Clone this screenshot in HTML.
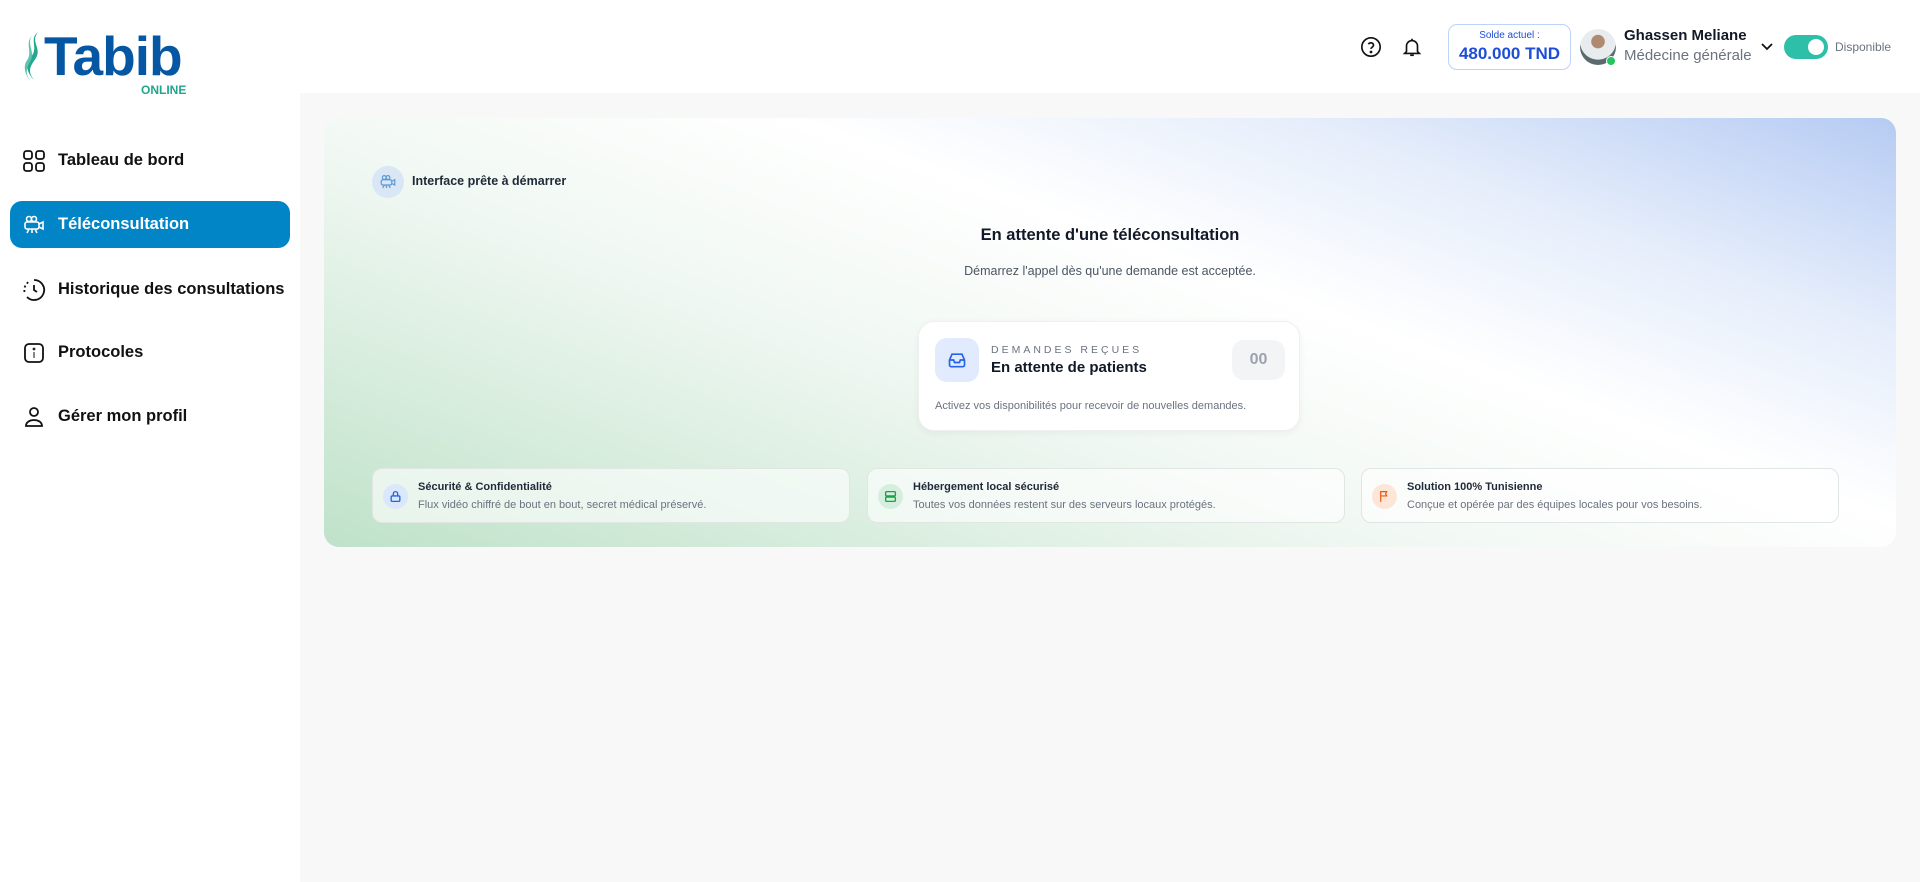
<!DOCTYPE html>
<html><head><meta charset="utf-8"><style>
*{box-sizing:border-box;margin:0;padding:0}
body{width:1920px;height:882px;overflow:hidden;background:#f8f8f8;font-family:"Liberation Sans",sans-serif;color:#111827;position:relative}
.hdr{position:absolute;left:0;top:0;width:1920px;height:93px;background:#fff;z-index:2}
.side{position:absolute;left:0;top:93px;width:300px;height:789px;background:#fff}
.nav{position:absolute;left:10px;width:280px;height:47px;display:flex;align-items:center;font-size:16.5px;font-weight:bold;color:#111;white-space:nowrap}
.nav svg{position:absolute;left:12px}
.nav span{position:absolute;left:48px}
.nav.act{background:#0285c6;color:#fff;border-radius:12px}
.hero{position:absolute;left:324px;top:118px;width:1572px;height:429px;border-radius:15px;background:linear-gradient(200deg,#b6cbf3 0%,#e6eefb 22%,#ffffff 40%,#f1f8f3 60%,#bfe2c9 100%)}
.abs{position:absolute}
.feat{position:absolute;top:350px;height:55px;width:478px;border:1px solid #dfe6e4;border-radius:10px;background:rgba(255,255,255,.6)}
.feat .ic{position:absolute;left:10px;top:15px;width:25px;height:25px;border-radius:50%}
.feat .t{position:absolute;left:45px;top:12px;font-size:11px;font-weight:bold;color:#1f2937}
.feat .d{position:absolute;left:45px;top:30px;font-size:11px;color:#6b7280}
</style></head><body>
<div class="hdr">
  <svg class="abs" style="left:20px;top:30px" width="26" height="52" viewBox="0 0 26 52"><path d="M18 2C8 10 20 18 10 28 4 34 8 44 14 50 6 40 12 34 16 28 22 18 10 12 18 2Z" fill="#21a88f"/><path d="M12 6C4 14 14 22 6 32 3 38 6 46 10 50 4 42 8 36 10 32 16 22 6 14 12 6Z" fill="#5ec3ad"/></svg>
  <div class="abs" style="left:44px;top:25px;font-size:55px;font-weight:bold;color:#0657a3;letter-spacing:-1px;line-height:62px">Tabib</div>
  <div class="abs" style="left:141px;top:83px;font-size:12px;font-weight:bold;color:#22a58e;line-height:14px">ONLINE</div>

  <svg class="abs" style="left:1360px;top:36px" width="22" height="22" viewBox="0 0 24 24" fill="none" stroke="#111" stroke-width="1.8"><circle cx="12" cy="12" r="10"/><path d="M9.2 9a3 3 0 0 1 5.6 1c0 2-2.8 2.5-2.8 4"/><circle cx="12" cy="17.5" r=".6" fill="#111"/></svg>
  <svg class="abs" style="left:1401px;top:35px" width="22" height="24" viewBox="0 0 24 24" fill="none" stroke="#111" stroke-width="1.8"><path d="M6 17V11a6 6 0 0 1 12 0v6l2 2H4z"/><path d="M10 21h4"/><path d="M12 3v2"/></svg>
  <div class="abs" style="left:1448px;top:24px;width:123px;height:46px;border:1.5px solid #bcd3f6;border-radius:9px;text-align:center">
    <div style="font-size:10px;color:#1d4ed8;margin-top:5px">Solde actuel :</div>
    <div style="font-size:17px;font-weight:bold;color:#1d4ed8;margin-top:3px">480.000 TND</div>
  </div>
  <div class="abs" style="left:1580px;top:29px;width:36px;height:36px;border-radius:50%;background:radial-gradient(circle at 50% 35%,#b08a70 0 22%,#e8ecef 24% 60%,#5a6b70 62%)"></div>
  <div class="abs" style="left:1606px;top:56px;width:10px;height:10px;border-radius:50%;background:#22c55e;border:1px solid #fff"></div>
  <div class="abs" style="left:1624px;top:27px;font-size:15px;font-weight:bold">Ghassen Meliane</div>
  <div class="abs" style="left:1624px;top:47px;font-size:15px;color:#6b7280">Médecine générale</div>
  <svg class="abs" style="left:1760px;top:42px" width="14" height="10" viewBox="0 0 14 10" fill="none" stroke="#111" stroke-width="1.8"><path d="M2 2l5 5 5-5"/></svg>
  <div class="abs" style="left:1784px;top:35px;width:44px;height:24px;border-radius:12px;background:#2ebfa8"><div style="position:absolute;right:4px;top:4px;width:16px;height:16px;border-radius:50%;background:#fff"></div></div>
  <div class="abs" style="left:1835px;top:40px;font-size:12px;color:#6b7280">Disponible</div>
</div>
<div class="side"></div>
<div class="nav" style="top:137px"><svg width="24" height="24" viewBox="0 0 24 24" fill="none" stroke="#111" stroke-width="1.8"><rect x="2" y="2" width="8" height="8" rx="2.5"/><rect x="14" y="2" width="8" height="8" rx="2.5"/><rect x="2" y="14" width="8" height="8" rx="2.5"/><rect x="14" y="14" width="8" height="8" rx="2.5"/></svg><span>Tableau de bord</span></div>
<div class="nav act" style="top:201px"><svg width="24" height="24" viewBox="0 0 24 24" fill="none" stroke="#fff" stroke-width="1.6"><circle cx="7" cy="6" r="2.5"/><circle cx="12" cy="6" r="2.5"/><rect x="3" y="9" width="14" height="7" rx="2"/><path d="M17 11l4-2v7l-4-2M7 16l-2 4M10 16v4M13 16l2 4"/></svg><span>Téléconsultation</span></div>
<div class="nav" style="top:266px"><svg width="24" height="24" viewBox="0 0 24 24" fill="none" stroke="#111" stroke-width="1.8"><path d="M12 2a10 10 0 1 1-7 17" /><path d="M2.5 14a10 10 0 0 1 4-10" stroke-dasharray="2 2.5"/><path d="M12 7v5l3 2"/></svg><span>Historique des consultations</span></div>
<div class="nav" style="top:329px"><svg width="24" height="24" viewBox="0 0 24 24" fill="none" stroke="#111" stroke-width="1.8"><rect x="3" y="3" width="18" height="18" rx="4"/><path d="M12 11v6" stroke-width="1"/><circle cx="12" cy="8" r=".5"/></svg><span>Protocoles</span></div>
<div class="nav" style="top:393px"><svg width="24" height="24" viewBox="0 0 24 24" fill="none" stroke="#111" stroke-width="1.8"><circle cx="12" cy="7" r="4"/><path d="M4 21c0-4 4-6 8-6s8 2 8 6z"/></svg><span>Gérer mon profil</span></div>

<div class="hero">
  <div class="abs" style="left:48px;top:48px;width:32px;height:32px;border-radius:50%;background:#d9e6f6"></div>
  <svg class="abs" style="left:55px;top:55px" width="18" height="18" viewBox="0 0 24 24" fill="none" stroke="#5b9bd5" stroke-width="1.6"><circle cx="7" cy="6" r="2.5"/><circle cx="12" cy="6" r="2.5"/><rect x="3" y="9" width="14" height="7" rx="2"/><path d="M17 11l4-2v7l-4-2M7 16l-2 4M10 16v4M13 16l2 4"/></svg>
  <div class="abs" style="left:88px;top:56px;font-size:12.5px;font-weight:bold;color:#1f2937">Interface prête à démarrer</div>
  <div class="abs" style="left:0;width:1572px;top:108px;text-align:center;font-size:16.5px;font-weight:bold;color:#111827">En attente d'une téléconsultation</div>
  <div class="abs" style="left:0;width:1572px;top:146px;text-align:center;font-size:12.5px;color:#4b5563">Démarrez l'appel dès qu'une demande est acceptée.</div>
  <div class="abs" style="left:594px;top:203px;width:382px;height:110px;background:#fff;border-radius:16px;box-shadow:0 2px 8px rgba(0,0,0,.05);border:1px solid #eef0f2">
    <div class="abs" style="left:16px;top:16px;width:44px;height:44px;border-radius:12px;background:#e1ebfd"></div>
    <svg class="abs" style="left:28px;top:28px" width="20" height="20" viewBox="0 0 24 24" fill="none" stroke="#2563eb" stroke-width="2"><path d="M3 12l3-7h12l3 7v6a2 2 0 0 1-2 2H5a2 2 0 0 1-2-2z"/><path d="M3 12h5l1 3h6l1-3h5"/></svg>
    <div class="abs" style="left:72px;top:22px;font-size:10.5px;letter-spacing:3px;color:#6b7280">DEMANDES REÇUES</div>
    <div class="abs" style="left:72px;top:37px;font-size:15px;font-weight:bold;color:#111827">En attente de patients</div>
    <div class="abs" style="left:313px;top:18px;width:53px;height:40px;border-radius:12px;background:#f3f4f6;text-align:center;line-height:40px;font-size:16px;font-weight:bold;color:#9ca3af">00</div>
    <div class="abs" style="left:16px;top:78px;font-size:11px;color:#6b7280">Activez vos disponibilités pour recevoir de nouvelles demandes.</div>
  </div>
  <div class="feat" style="left:48px"><div class="ic" style="background:#dbe7fb"></div><svg class="abs" style="left:16px;top:21px" width="13" height="13" viewBox="0 0 24 24" fill="none" stroke="#2563eb" stroke-width="2.5"><rect x="4" y="11" width="16" height="10" rx="2"/><path d="M8 11V7a4 4 0 0 1 8 0v4"/></svg><div class="t">Sécurité &amp; Confidentialité</div><div class="d">Flux vidéo chiffré de bout en bout, secret médical préservé.</div></div>
  <div class="feat" style="left:543px"><div class="ic" style="background:#d5eedd"></div><svg class="abs" style="left:16px;top:21px" width="13" height="13" viewBox="0 0 24 24" fill="none" stroke="#16a34a" stroke-width="2.5"><rect x="3" y="3" width="18" height="8" rx="2"/><rect x="3" y="13" width="18" height="8" rx="2"/></svg><div class="t">Hébergement local sécurisé</div><div class="d">Toutes vos données restent sur des serveurs locaux protégés.</div></div>
  <div class="feat" style="left:1037px"><div class="ic" style="background:#fde6d8"></div><svg class="abs" style="left:16px;top:21px" width="13" height="13" viewBox="0 0 24 24" fill="none" stroke="#ea580c" stroke-width="2.2"><path d="M5 22V3h11l-2 4 2 4H5"/></svg><div class="t">Solution 100% Tunisienne</div><div class="d">Conçue et opérée par des équipes locales pour vos besoins.</div></div>
</div>
</body></html>
